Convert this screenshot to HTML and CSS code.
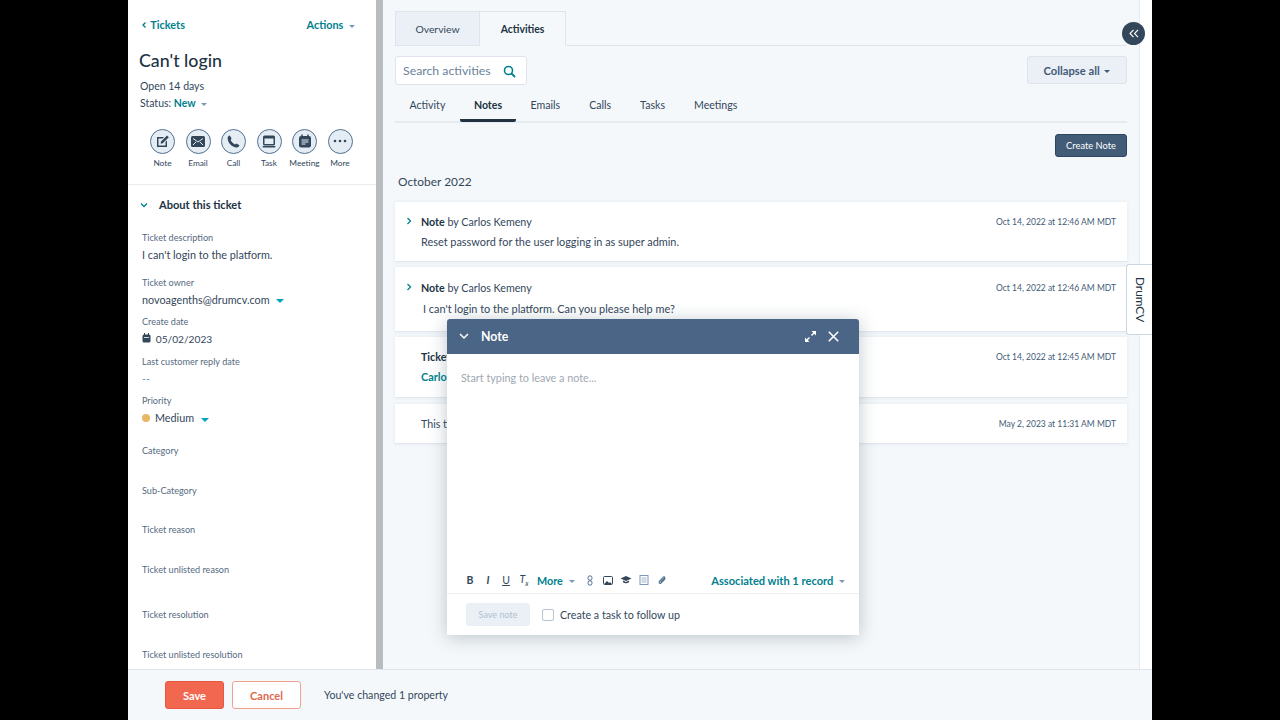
FILE: index.html
```html
<!DOCTYPE html>
<html lang="en">
  <head>
    <meta charset="UTF-8" />
    <title>Can't login - Ticket</title>
    <link rel="stylesheet" href="styles.css">
  </head>
  <body>
    <div class="app">
      <div class="workspace">
        <aside class="sidebar">
          <div class="side-top">
            <a class="link back">
              <svg class="chev" width="6" height="8" viewBox="0 0 6 8"><path d="M4.500 1.500 2 4l2.500 2.500" /></svg>
              Tickets
            </a>
            <a class="link">Actions <span class="caret caret-gray"></span></a>
          </div>
          <h1>Can't login</h1>
          <p class="meta">Open 14 days</p>
          <p class="meta">Status: <b class="link">New</b> <span class="caret caret-gray"></span></p>

          <div class="actions">
            <div class="action">
              <span class="action-icon">
                <svg width="14" height="14" viewBox="0 0 14 14"><path d="M1 3h7L6.500 4.500H2.500v7h7V8L11 6.500V13H1z" fill="#33475b" /><path d="M5 7.500 11 1.500 12.800 3.300 6.800 9.300 4.700 9.800z" fill="#33475b" /></svg>
              </span>
              Note
            </div>
            <div class="action">
              <span class="action-icon">
                <svg width="14" height="11" viewBox="0 0 14 11"><rect width="14" height="11" rx="1.500" fill="#33475b" /><path d="M2 2.500 7 6l5-3.500M2 9l3-3M12 9 9 6" stroke="#fff" fill="none" stroke-width="0.900" /></svg>
              </span>
              Email
            </div>
            <div class="action">
              <span class="action-icon">
                <svg width="13" height="13" viewBox="0 0 13 13"><path d="M2.800.600 4.600 3.600 3.600 5C4.400 6.800 6 8.500 8 9.400l1.400-1 3 1.800c-.2 1.300-1.300 2.300-2.600 2.200C4.700 12 1 8 .600 3.200.600 1.900 1.500.800 2.800.600z" fill="#33475b" /></svg>
              </span>
              Call
            </div>
            <div class="action">
              <span class="action-icon">
                <svg width="14" height="13" viewBox="0 0 14 13"><rect x="1" y="0.500" width="12" height="10" rx="1.500" fill="#33475b" /><rect x="2.500" y="3.500" width="9" height="5.500" fill="#e5edf4" /><rect x="0.500" y="11" width="13" height="1.600" rx="0.800" fill="#33475b" /></svg>
              </span>
              Task
            </div>
            <div class="action">
              <span class="action-icon">
                <svg width="14" height="14" viewBox="0 0 14 14"><rect x="1" y="2" width="12" height="11.500" rx="2" fill="#33475b" /><path d="M4 .500v3M10 .500v3" stroke="#33475b" stroke-width="1.500" /><path d="M3.500 6h7M3.500 8h7M3.500 10h4" stroke="#e5edf4" /></svg>
              </span>
              Meeting
            </div>
            <div class="action">
              <span class="action-icon">
                <svg width="14" height="4" viewBox="0 0 14 4"><circle cx="2" cy="2" r="1.300" fill="#33475b" /><circle cx="7" cy="2" r="1.300" fill="#33475b" /><circle cx="12" cy="2" r="1.300" fill="#33475b" /></svg>
              </span>
              More
            </div>
          </div>

          <div class="about">
            <svg class="chev" width="8" height="6" viewBox="0 0 8 6"><path d="M1 1.500 4 4.500l3-3" /></svg>
            <b>About this ticket</b>
          </div>

          <div class="fields">
            <div class="field">
              <label>Ticket description</label>
              <div class="value">I can't login to the platform.</div>
            </div>
            <div class="field field-short">
              <label>Ticket owner</label>
              <div class="value">novoagenths@drumcv.com <span class="caret caret-teal"></span></div>
            </div>
            <div class="field field-short">
              <label>Create date</label>
              <div class="value">
                <svg width="9" height="10" viewBox="0 0 9 10"><rect x="0.500" y="1.500" width="8" height="8" rx="1.500" fill="#33475b" /><path d="M2.500 0v2.500M6.500 0v2.500" stroke="#33475b" /><path d="M2 4.500h5" stroke="#fff" stroke-width="0.800" /></svg>
                <span class="date">05/02/2023</span>
              </div>
            </div>
            <div class="field field-short">
              <label>Last customer reply date</label>
              <div class="value muted">--</div>
            </div>
            <div class="field field-tall">
              <label>Priority</label>
              <div class="value"><span class="dot"></span>Medium <span class="caret caret-teal"></span></div>
            </div>
            <div class="field field-short"><label>Category</label></div>
            <div class="field field-short"><label>Sub-Category</label></div>
            <div class="field field-short"><label>Ticket reason</label></div>
            <div class="field"><label>Ticket unlisted reason</label></div>
            <div class="field field-short"><label>Ticket resolution</label></div>
            <div class="field field-short"><label>Ticket unlisted resolution</label></div>
          </div>
        </aside>
        <div class="side-scroll"></div>

        <main class="main">
          <div class="tabs">
            <div class="tab">Overview</div>
            <div class="tab tab-active">Activities</div>
          </div>

          <div class="toolbar">
            <div class="search">
              Search activities
              <svg width="13" height="13" viewBox="0 0 13 13"><circle cx="5.500" cy="5.500" r="4" fill="none" stroke="#00818f" stroke-width="1.600" /><path d="M8.500 8.500 12 12" stroke="#00818f" stroke-width="1.800" /></svg>
            </div>
            <button class="btn-collapse">Collapse all <span class="caret caret-dark"></span></button>
          </div>

          <nav class="subtabs">
            <span>Activity</span>
            <span class="subtab-active">Notes</span>
            <span>Emails</span>
            <span>Calls</span>
            <span>Tasks</span>
            <span>Meetings</span>
          </nav>

          <div class="create-row"><button class="btn-create">Create Note</button></div>
          <h2>October 2022</h2>

          <div class="card card-note">
            <div class="card-head">
              <div><svg class="chev" width="6" height="8" viewBox="0 0 6 8"><path d="M1.500 1l3 3-3 3" /></svg><b>Note</b> by Carlos Kemeny</div>
              <time>Oct 14, 2022 at 12:46 AM MDT</time>
            </div>
            <p>Reset password for the user logging in as super admin.</p>
          </div>
          <div class="card card-note card-note-2">
            <div class="card-head">
              <div><svg class="chev" width="6" height="8" viewBox="0 0 6 8"><path d="M1.500 1l3 3-3 3" /></svg><b>Note</b> by Carlos Kemeny</div>
              <time>Oct 14, 2022 at 12:46 AM MDT</time>
            </div>
            <p>I can't login to the platform. Can you please help me?</p>
          </div>
          <div class="card card-ticket">
            <div class="card-head">
              <div><b>Ticket</b></div>
              <time>Oct 14, 2022 at 12:45 AM MDT</time>
            </div>
            <p class="link"><b>Carlos</b></p>
          </div>
          <div class="card card-last">
            <div class="card-head">
              <div>This ticket</div>
              <time>May 2, 2023 at 11:31 AM MDT</time>
            </div>
          </div>
        </main>
        <div class="rail"></div>
      </div>

      <footer class="footer">
        <button class="btn-save">Save</button>
        <button class="btn-cancel">Cancel</button>
        <span>You've changed 1 property</span>
      </footer>

      <button class="collapse-round">
        <svg width="10" height="9" viewBox="0 0 10 9"><path d="M4.500 .800 1 4.500l3.500 3.700M9 .800 5.500 4.500 9 8.200" fill="none" stroke="#fff" stroke-width="1.100" /></svg>
      </button>
      <div class="drum-tab"><span>DrumCV</span></div>

      <section class="modal">
        <header class="modal-head">
          <svg width="10" height="7" viewBox="0 0 10 7"><path d="M1 1l4 4 4-4" fill="none" stroke="#fff" stroke-width="1.500" /></svg>
          <b>Note</b>
          <svg class="modal-expand" width="11" height="11" viewBox="0 0 11 11"><path d="M6.500 0H11v4.500L9.300 2.800 7 5 6 4 8.200 1.700zM4.500 11H0V6.500l1.700 1.700L4 6l1 1-2.200 2.300z" fill="#fff" /></svg>
          <svg width="11" height="11" viewBox="0 0 11 11"><path d="M.800.800l9.400 9.400M10.200.800.800 10.200" stroke="#fff" stroke-width="1.600" /></svg>
        </header>
        <div class="modal-body">Start typing to leave a note...</div>
        <div class="editor-bar">
          <span class="fmt fmt-b">B</span>
          <span class="fmt fmt-i">I</span>
          <span class="fmt fmt-u">U</span>
          <span class="fmt fmt-i fmt-clear">T<sub>x</sub></span>
          <span class="link more">More <span class="caret caret-gray"></span></span>
          <svg class="tool tool-first" width="6" height="11" viewBox="0 0 6 11"><rect x="1" y="0.800" width="4" height="4.500" rx="2" fill="none" stroke="#516f90" /><rect x="1" y="5.700" width="4" height="4.500" rx="2" fill="none" stroke="#516f90" /></svg>
          <svg class="tool" width="10" height="9" viewBox="0 0 10 9"><rect x="0.500" y="0.500" width="9" height="8" rx="1" fill="none" stroke="#33475b" /><path d="M1 8l3-3 2 2 1-1 2 2z" fill="#33475b" /></svg>
          <svg class="tool" width="11" height="8" viewBox="0 0 11 8"><path d="M5.500 0 11 2.500 5.500 5 0 2.500z" fill="#33475b" /><path d="M2.500 4.500v1.700c1.500 1.300 4.500 1.300 6 0V4.500L5.500 6z" fill="#33475b" /></svg>
          <svg class="tool" width="9" height="10" viewBox="0 0 9 10"><rect x="0.500" y="0.500" width="8" height="9" fill="none" stroke="#7c98b6" /><path d="M2 3h5M2 5h5M2 7h5" stroke="#7c98b6" stroke-width="0.700" /></svg>
          <svg class="tool" width="9" height="10" viewBox="0 0 9 10"><path d="M7.800 3.500 3.500 8c-1 1-2.600-.500-1.600-1.600L6 2c.7-.7 1.800.300 1.100 1L3.200 7" fill="none" stroke="#516f90" stroke-width="1.100" /></svg>
          <span class="link assoc">Associated with 1 record <span class="caret caret-gray"></span></span>
        </div>
        <div class="modal-foot">
          <button class="btn-note">Save note</button>
          <span class="check"></span>
          <span>Create a task to follow up</span>
        </div>
      </section>
    </div>
  </body>
</html>
```

FILE: styles.css
```css
* {
  box-sizing: border-box;
}

body {
  margin: 0;
  background-color: #000;
  font-family: Lato, "Open Sans", sans-serif;
  font-size: 10.900px;
  color: #33475b;
}

h1,
h2,
p {
  margin: 0;
}

button {
  font-family: inherit;
}

.app {
  position: relative;
  width: 1024px;
  height: 720px;
  margin: 0 auto;
  display: flex;
  flex-direction: column;
  overflow: hidden;
  background-color: #fff;
}

.workspace {
  flex: 1;
  display: flex;
  min-height: 0;
}

.link {
  color: #00818f;
  font-weight: 700;
}

.chev path {
  fill: none;
  stroke: #00818f;
  stroke-width: 1.300;
}

/* small dropdown arrows */
.caret {
  display: inline-block;
  margin-left: 3px;
  vertical-align: middle;
  border-left: 3px solid transparent;
  border-right: 3px solid transparent;
  border-top: 3px solid #7c98b6;
}

.caret-teal {
  margin-left: 4px;
  border-left-width: 4px;
  border-right-width: 4px;
  border-top: 4px solid #00a4bd;
}

.caret-dark {
  margin-left: 2px;
  border-top-color: #425b76;
}

/* Left column */
.sidebar {
  width: 248px;
  height: 669px;
  overflow: hidden;
  padding-top: 18px;
}

.side-top {
  display: flex;
  justify-content: space-between;
  padding: 0 21px 0 13px;
  line-height: 14px;
}

.back svg {
  margin-right: 1px;
}

h1 {
  margin: 17px 0 0 11px;
  font-size: 17.800px;
  line-height: 23px;
  font-weight: 500;
  color: #213343;
}

.meta {
  margin: 7px 0 0 12px;
  line-height: 14px;
  font-size: 10.500px;
}

.meta + .meta {
  margin-top: 3px;
}

.actions {
  display: flex;
  gap: 10.500px;
  margin: 18.500px 0 0 22px;
}

.action {
  width: 25px;
  display: flex;
  flex-direction: column;
  align-items: center;
  gap: 3px;
  font-size: 8.300px;
  white-space: nowrap;
  line-height: 12px;
}

.action-icon {
  width: 25px;
  height: 25px;
  border-radius: 50%;
  display: flex;
  align-items: center;
  justify-content: center;
  border: 1px solid #516f90;
  background-color: #e5edf4;
}

.about {
  display: flex;
  align-items: center;
  gap: 11px;
  height: 40px;
  margin-top: 15.500px;
  padding-left: 12px;
  border-top: 1px solid #e8ecf0;
  line-height: 14px;
  font-size: 11.100px;
  color: #213343;
}

.fields {
  padding: 0 14px;
  margin-top: 6.500px;
}

.field {
  height: 45px;
}

.field-short {
  height: 39.600px;
}

.field-tall {
  height: 50px;
}

.field label {
  display: block;
  font-size: 9.100px;
  line-height: 13px;
  color: #566a7f;
}

.value {
  margin-top: 3px;
  font-size: 10.800px;
  line-height: 15px;
  color: #33475b;
}

.muted {
  color: #7c98b6;
}

.date {
  margin-left: 2px;
  font-size: 10.200px;
}

.dot {
  display: inline-block;
  width: 8px;
  height: 8px;
  margin-right: 5px;
  border-radius: 50%;
  background-color: #e8b765;
}

.side-scroll {
  width: 7px;
  height: 669px;
  background-color: #b9bcbf;
}

/* Main column */
.main {
  width: 756px;
  height: 669px;
  overflow: hidden;
  padding: 11px 12px 0;
  background-color: #f5f8fa;
}

.tabs {
  display: flex;
  height: 35px;
  border-bottom: 1px solid #dfe3eb;
}

.tab {
  width: 85px;
  height: 35px;
  display: flex;
  align-items: center;
  justify-content: center;
  font-size: 10.400px;
  background-color: #eaf0f6;
  border: 1px solid #dfe3eb;
}

.tab-active {
  width: 86px;
  background-color: #f5f8fa;
  border-bottom-color: #f5f8fa;
  border-left: none;
  font-weight: 700;
  color: #213343;
}

.toolbar {
  display: flex;
  justify-content: space-between;
  margin-top: 10px;
}

.search {
  width: 132px;
  height: 29px;
  display: flex;
  align-items: center;
  justify-content: space-between;
  padding: 0 10px 0 7px;
  font-size: 12.300px;
  color: #6b8299;
  background-color: #fff;
  border: 1px solid #dfe3eb;
  border-radius: 3px;
}

.search svg {
  margin-top: 2px;
}

.btn-collapse {
  width: 100px;
  height: 28px;
  padding: 0;
  font-size: 11.200px;
  font-weight: 700;
  color: #425b76;
  background-color: #eaf0f6;
  border: 1px solid #dfe3eb;
  border-radius: 3px;
}

.subtabs {
  display: flex;
  height: 38px;
  padding-top: 13px;
  font-size: 10.600px;
  line-height: 14px;
  border-bottom: 2px solid #e6ebf0;
}

.subtabs span {
  height: 24px;
  padding: 0 14.500px;
}

.subtabs .subtab-active {
  margin: 0 0 -2px 0;
  padding: 0 14px;
  font-weight: 700;
  color: #213343;
  border-bottom: 3px solid #213343;
  border-radius: 0 0 2px 2px;
}

.create-row {
  display: flex;
  justify-content: flex-end;
  margin-top: 11px;
}

.btn-create {
  width: 72px;
  height: 23px;
  padding: 0;
  font-size: 9.300px;
  color: #fff;
  background-color: #425b76;
  border: 1px solid #2e4560;
  border-radius: 3px;
}

h2 {
  margin: 17px 0 12px 3px;
  font-size: 11.900px;
  line-height: 16px;
  font-weight: 400;
  color: #33475b;
}

.card {
  margin-bottom: 5px;
  padding: 13px 11px 0 26px;
  background-color: #fff;
  border-bottom: 1px solid #e2e8ee;
  box-shadow: 0 0 3px rgba(210, 220, 230, 0.5);
}

.card-note {
  height: 60px;
}

.card-note-2 {
  height: 65px;
  padding-top: 14px;
}

.card-ticket {
  height: 61px;
  margin-bottom: 6px;
}

.card-last {
  height: 40px;
  padding-top: 13px;
}

.card-head {
  position: relative;
  display: flex;
  justify-content: space-between;
  font-size: 10.700px;
  line-height: 14px;
}

.card-head .chev {
  position: absolute;
  left: -15px;
  top: 2px;
}

.card-head b,
.card p b {
  font-weight: 700;
  color: #213343;
}

.card p {
  margin-top: 6px;
  line-height: 14px;
}

.card-note-2 p {
  margin-top: 7px;
  padding-left: 2px;
}

.card .link b {
  color: #00818f;
}

time {
  font-size: 8.500px;
  color: #425b76;
}

.rail {
  flex: 1;
  border-left: 1px solid #e6ebf0;
}

/* Bottom bar */
.footer {
  height: 51px;
  display: flex;
  align-items: center;
  padding: 0 0 0 37px;
  font-size: 10.600px;
  background-color: #f5f8fa;
  border-top: 1px solid #dfe3eb;
}

.btn-save,
.btn-cancel {
  height: 28px;
  padding: 0;
  font-weight: 700;
  font-size: 11px;
  border-radius: 3px;
}

.btn-save {
  width: 59px;
  color: #fff;
  background-color: #f2674f;
  border: 1px solid #e5583f;
}

.btn-cancel {
  width: 69px;
  margin: 0 23px 0 8px;
  color: #e0664f;
  background-color: #fff;
  border: 1px solid #f2a191;
}

/* Floating bits */
.collapse-round {
  position: absolute;
  left: 994px;
  top: 22px;
  width: 23px;
  height: 23px;
  padding: 0;
  display: flex;
  align-items: center;
  justify-content: center;
  background-color: #33475b;
  border: none;
  border-radius: 50%;
}

.drum-tab {
  position: absolute;
  left: 998px;
  top: 264px;
  width: 27px;
  height: 71px;
  display: flex;
  align-items: center;
  justify-content: center;
  background-color: #fff;
  border: 1px solid #cbd6e2;
  border-right: none;
  border-radius: 3px 0 0 3px;
}

.drum-tab span {
  writing-mode: vertical-rl;
  font-size: 11.800px;
  color: #213343;
}

.modal {
  position: absolute;
  left: 319px;
  top: 319px;
  width: 412px;
  height: 316px;
  display: flex;
  flex-direction: column;
  background-color: #fff;
  border-radius: 3px 3px 0 0;
  box-shadow: 0 2px 18px rgba(60, 80, 100, 0.32);
}

.modal-head {
  height: 35px;
  flex: none;
  display: flex;
  align-items: center;
  padding: 0 20px 0 12px;
  color: #fff;
  font-size: 12.300px;
  background-color: #4a6585;
  border-radius: 3px 3px 0 0;
}

.modal-head b {
  flex: 1;
  margin-left: 12px;
}

.modal-expand {
  margin-right: 12px;
}

.modal-body {
  flex: 1;
  padding: 17px 14px;
  font-size: 10.800px;
  line-height: 14px;
  color: #a0a8b2;
}

.editor-bar {
  height: 29px;
  flex: none;
  display: flex;
  align-items: center;
  padding: 2px 14px 0 14px;
  border-bottom: 1px solid #eef1f4;
}

.fmt {
  width: 18px;
  text-align: center;
  font-size: 10.500px;
  color: #33475b;
}

.fmt-b {
  font-weight: 700;
}

.fmt-i {
  font-style: italic;
  font-weight: 700;
}

.fmt-u {
  text-decoration: underline;
}

.fmt-clear {
  font-weight: 400;
}

.fmt sub {
  font-size: 7px;
}

.more {
  margin-left: 4px;
  font-size: 10.800px;
}

.tool {
  width: 18px;
}

.tool-first {
  margin-left: 6px;
}

.assoc {
  margin-left: auto;
  font-size: 11.100px;
}

.modal-foot {
  height: 41px;
  flex: none;
  display: flex;
  align-items: center;
  padding: 0 0 0 19px;
  font-size: 10.700px;
}

.btn-note {
  width: 64px;
  height: 23px;
  padding: 0;
  font-size: 9px;
  color: #b0c0d0;
  background-color: #eaf0f6;
  border: none;
  border-radius: 3px;
}

.check {
  width: 12px;
  height: 12px;
  margin: 0 6px 0 12px;
  background-color: #fff;
  border: 1px solid #b5c3d2;
  border-radius: 2px;
}
```
